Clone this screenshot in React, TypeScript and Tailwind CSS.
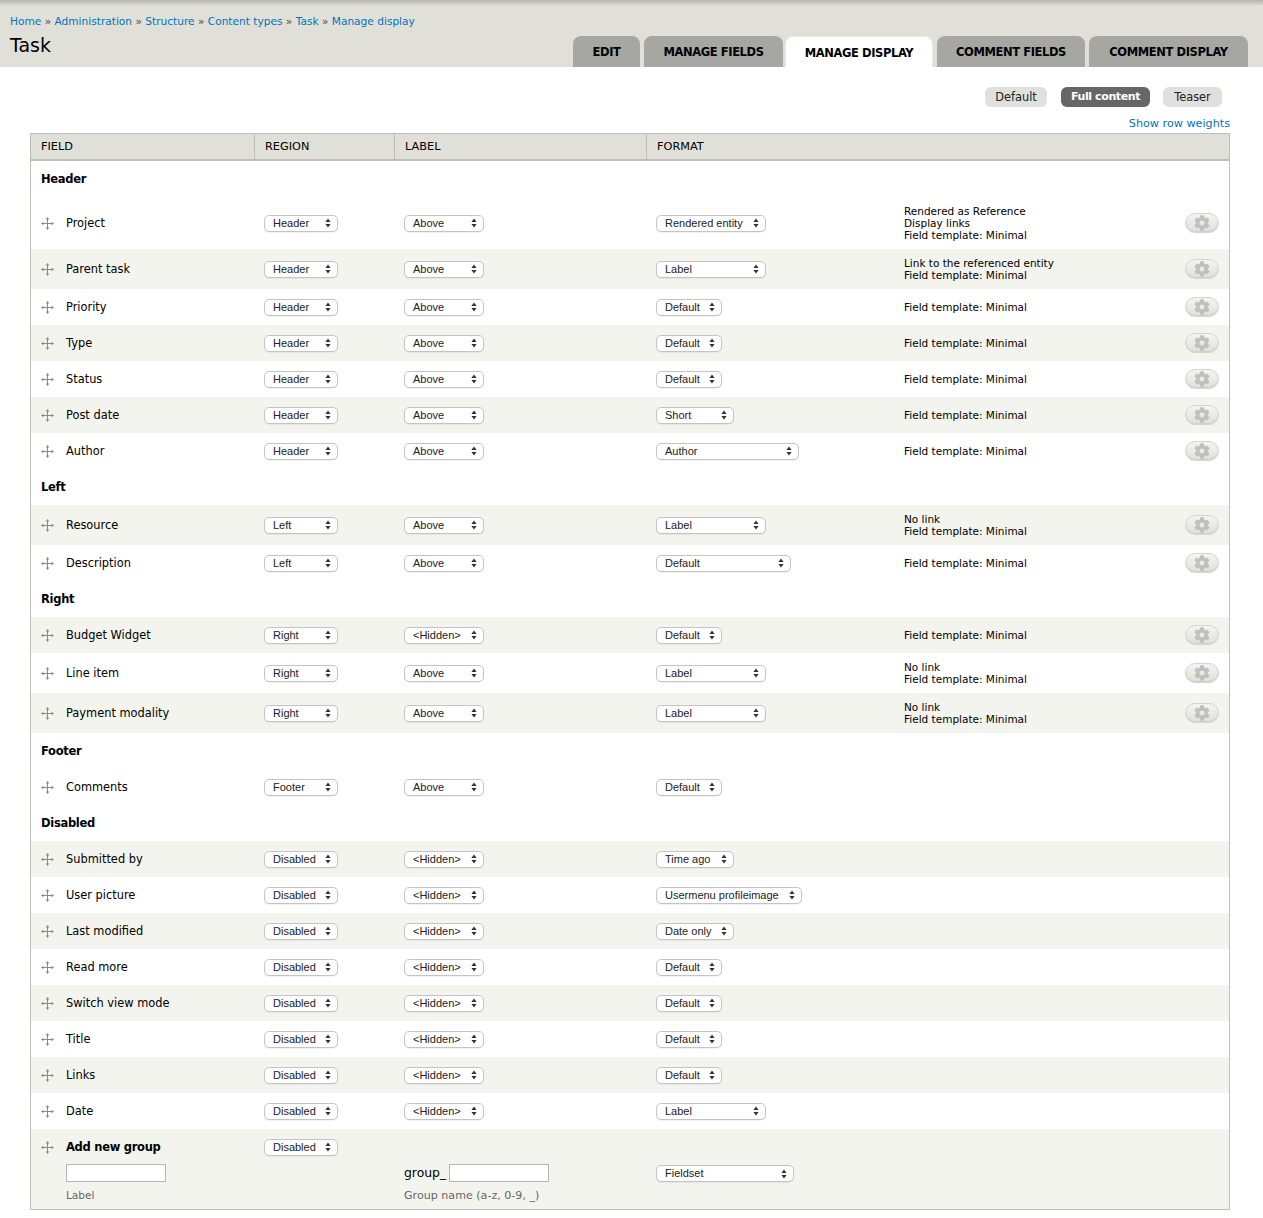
import React from "react";
import { FaCog } from "react-icons/fa";

const FT = "Field template: Minimal";
type Row = { t: "r"; name: string; h: number; alt?: boolean; region: string; label: string; format: string; fw: number; sum?: string[]; gear?: boolean } | { t: "g"; name: string };

const L = "<Hidden>";
const rows: Row[] = [
  { t: "g", name: "Header" },
  { t: "r", name: "Project", h: 52, region: "Header", label: "Above", format: "Rendered entity", fw: 110, sum: ["Rendered as Reference", "Display links", FT], gear: true },
  { t: "r", name: "Parent task", h: 40, alt: true, region: "Header", label: "Above", format: "Label", fw: 110, sum: ["Link to the referenced entity", FT], gear: true },
  { t: "r", name: "Priority", h: 36, region: "Header", label: "Above", format: "Default", fw: 66, sum: [FT], gear: true },
  { t: "r", name: "Type", h: 36, alt: true, region: "Header", label: "Above", format: "Default", fw: 66, sum: [FT], gear: true },
  { t: "r", name: "Status", h: 36, region: "Header", label: "Above", format: "Default", fw: 66, sum: [FT], gear: true },
  { t: "r", name: "Post date", h: 36, alt: true, region: "Header", label: "Above", format: "Short", fw: 78, sum: [FT], gear: true },
  { t: "r", name: "Author", h: 36, region: "Header", label: "Above", format: "Author", fw: 143, sum: [FT], gear: true },
  { t: "g", name: "Left" },
  { t: "r", name: "Resource", h: 40, alt: true, region: "Left", label: "Above", format: "Label", fw: 110, sum: ["No link", FT], gear: true },
  { t: "r", name: "Description", h: 36, region: "Left", label: "Above", format: "Default", fw: 135, sum: [FT], gear: true },
  { t: "g", name: "Right" },
  { t: "r", name: "Budget Widget", h: 36, alt: true, region: "Right", label: L, format: "Default", fw: 66, sum: [FT], gear: true },
  { t: "r", name: "Line item", h: 40, region: "Right", label: "Above", format: "Label", fw: 110, sum: ["No link", FT], gear: true },
  { t: "r", name: "Payment modality", h: 40, alt: true, region: "Right", label: "Above", format: "Label", fw: 110, sum: ["No link", FT], gear: true },
  { t: "g", name: "Footer" },
  { t: "r", name: "Comments", h: 36, region: "Footer", label: "Above", format: "Default", fw: 66 },
  { t: "g", name: "Disabled" },
  { t: "r", name: "Submitted by", h: 36, alt: true, region: "Disabled", label: L, format: "Time ago", fw: 78 },
  { t: "r", name: "User picture", h: 36, region: "Disabled", label: L, format: "Usermenu profileimage", fw: 146 },
  { t: "r", name: "Last modified", h: 36, alt: true, region: "Disabled", label: L, format: "Date only", fw: 78 },
  { t: "r", name: "Read more", h: 36, region: "Disabled", label: L, format: "Default", fw: 66 },
  { t: "r", name: "Switch view mode", h: 36, alt: true, region: "Disabled", label: L, format: "Default", fw: 66 },
  { t: "r", name: "Title", h: 36, region: "Disabled", label: L, format: "Default", fw: 66 },
  { t: "r", name: "Links", h: 36, alt: true, region: "Disabled", label: L, format: "Default", fw: 66 },
  { t: "r", name: "Date", h: 36, region: "Disabled", label: L, format: "Label", fw: 110 },
];

function Sel({ text, w }: { text: string; w: number }) {
  return (
    <div
      style={{ width: w }}
      className="flex h-[17px] items-center justify-between rounded-[5px] border border-[#c4c4c4] bg-white pl-[8px] pr-[6px] font-['Liberation_Sans',sans-serif] text-[11px] leading-none text-[#222] shadow-[0_1px_1px_rgba(0,0,0,0.06)]"
    >
      <span className="whitespace-nowrap">{text}</span>
      <svg width="6" height="10" viewBox="0 0 6 10" className="shrink-0">
        <path d="M3 0.5 L5.6 4 H0.4 Z M3 9.5 L0.4 6 H5.6 Z" fill="#333" />
      </svg>
    </div>
  );
}

function Drag() {
  return (
    <svg width="13" height="13" viewBox="0 0 13 13" className="shrink-0">
      <path d="M6.5 1.5V11.5M1.5 6.5H11.5" stroke="#8a8a8a" strokeWidth="1" />
      <path d="M6.5 0 L8.3 2.4 H4.7 Z M6.5 13 L4.7 10.6 H8.3 Z M0 6.5 L2.4 4.7 V8.3 Z M13 6.5 L10.6 8.3 V4.7 Z" fill="#8a8a8a" />
    </svg>
  );
}

function Gear() {
  return (
    <div className="flex h-[20px] w-[34px] items-center justify-center rounded-full border border-[#d4d4d0] bg-gradient-to-b from-[#f4f4f2] to-[#dfdfdb] shadow-[inset_0_-1px_1px_rgba(0,0,0,0.08)]">
      <FaCog className="text-[#c0c0bc]" size={16} />
    </div>
  );
}

function Tab({ text, w, active }: { text: string; w: number; active?: boolean }) {
  return (
    <a
      style={{ width: w }}
      className={
        active
          ? "flex h-[31px] items-center justify-center rounded-t-[8px] border border-b-0 border-[#e8e8e4] bg-white pt-[3px] text-[11.5px] font-bold tracking-[-0.4px] text-[#000]"
          : "flex h-[31px] items-center justify-center rounded-t-[8px] bg-[#a6a7a2] pt-[3px] text-[11.5px] font-bold tracking-[-0.4px] text-[#000]"
      }
    >
      {text}
    </a>
  );
}

const crumbs = ["Home", "Administration", "Structure", "Content types", "Task", "Manage display"];

export default function App() {
  return (
    <div className="h-[1218px] w-[1263px] overflow-hidden bg-white font-['DejaVu_Sans',sans-serif] text-[11.4px] text-black">
      <header className="relative h-[67px] bg-[#e0e0d8]">
        <div className="h-[6px] bg-gradient-to-b from-[#b5b5b0] to-[#e0e0d8]" />
        <div className="flex pl-[10px] pt-[8px] text-[10.6px] leading-[14px]">
          {crumbs.map((c, i) => (
            <span key={c} className="whitespace-pre">
              <a className="text-[#0074bd]">{c}</a>
              {i < crumbs.length - 1 ? <span className="text-[#444]"> » </span> : null}
            </span>
          ))}
        </div>
        <h1 className="pl-[10px] pt-[5px] text-[19px] font-normal leading-[24px]">Task</h1>
        <nav className="absolute bottom-0 left-[573px] flex">
          <Tab text="EDIT" w={67} />
          <div className="w-[4px]" />
          <Tab text="MANAGE FIELDS" w={139} />
          <div className="w-[2px]" />
          <Tab text="MANAGE DISPLAY" w={148} active />
          <div className="w-[4px]" />
          <Tab text="COMMENT FIELDS" w={148} />
          <div className="w-[4px]" />
          <Tab text="COMMENT DISPLAY" w={159} />
        </nav>
      </header>

      <div className="flex justify-end pr-[41px] pt-[20px]">
        <a className="flex h-[20px] w-[62px] items-center justify-center rounded-[6px] bg-[#e0e0dc] pt-[1px] text-[#222]">Default</a>
        <a className="ml-[14px] flex h-[20px] w-[89px] items-center justify-center rounded-[6px] bg-[#666] pt-[1px] text-[11px] font-bold tracking-[-0.4px] text-white">Full content</a>
        <a className="ml-[13px] flex h-[20px] w-[59px] items-center justify-center rounded-[6px] bg-[#e0e0dc] pt-[1px] text-[#222]">Teaser</a>
      </div>
      <div className="pr-[33px] pt-[10px] text-right text-[11.2px] leading-[14px] text-[#0074bd]">Show row weights</div>

      <div className="mx-[30px] mt-[2px] w-[1200px] border border-[#bebfb9]">
        <div className="flex h-[27px] items-center border-b-2 border-[#bebfb9] bg-[#e0e0d8] text-[11.3px]">
          <div className="flex h-full w-[224px] items-center border-r border-[#bebfb9] pl-[10px] pt-[1px]">FIELD</div>
          <div className="flex h-full w-[140px] items-center border-r border-[#bebfb9] pl-[10px] pt-[1px]">REGION</div>
          <div className="flex h-full w-[252px] items-center border-r border-[#bebfb9] pl-[10px] pt-[1px]">LABEL</div>
          <div className="flex h-full items-center pl-[10px] pt-[1px]">FORMAT</div>
        </div>
        {rows.map((r) =>
          r.t === "g" ? (
            <div key={r.name} className="flex h-[36px] items-center pl-[10px] pt-[2px] text-[11.5px] font-bold tracking-[-0.3px]">
              {r.name}
            </div>
          ) : (
            <div key={r.name} style={{ height: r.h }} className={"flex items-center " + (r.alt ? "bg-[#f3f4ee]" : "bg-white")}>
              <div className="flex w-[224px] items-center pl-[10px] pt-[2px]">
                <Drag />
                <span className="ml-[12px]">{r.name}</span>
              </div>
              <div className="w-[140px] pl-[9px]"><Sel text={r.region} w={74} /></div>
              <div className="w-[252px] pl-[9px]"><Sel text={r.label} w={80} /></div>
              <div className="w-[257px] pl-[9px]"><Sel text={r.format} w={r.fw} /></div>
              <div className="w-[281px] text-[10.5px] leading-[12px]">
                {r.sum?.map((s) => <div key={s}>{s}</div>)}
              </div>
              <div>{r.gear ? <Gear /> : null}</div>
            </div>
          )
        )}
        <div className="h-[80px] bg-[#f3f4ee]">
          <div className="flex h-[35px] items-center pt-[1px]">
            <div className="flex w-[224px] items-center pl-[10px]">
              <Drag />
              <span className="ml-[12px] pt-[2px] text-[11.5px] font-bold tracking-[-0.28px]">Add new group</span>
            </div>
            <div className="pl-[9px]"><Sel text="Disabled" w={74} /></div>
          </div>
          <div className="flex">
            <div className="w-[364px] pl-[35px]">
              <div className="h-[18px] w-[100px] border border-[#b5b5b5] bg-white" />
              <div className="mt-[6px] text-[10.5px] leading-[14px] text-[#666]">Label</div>
            </div>
            <div className="w-[252px] pl-[9px]">
              <div className="flex h-[18px] items-center">
                <span className="w-[45px] text-[12.4px]">group_</span>
                <div className="h-[18px] w-[100px] border border-[#b5b5b5] bg-white" />
              </div>
              <div className="mt-[7px] text-[11.1px] leading-[14px] text-[#666]">Group name (a-z, 0-9, _)</div>
            </div>
            <div className="pl-[9px] pt-[1px]"><Sel text="Fieldset" w={138} /></div>
          </div>
        </div>
      </div>
    </div>
  );
}
